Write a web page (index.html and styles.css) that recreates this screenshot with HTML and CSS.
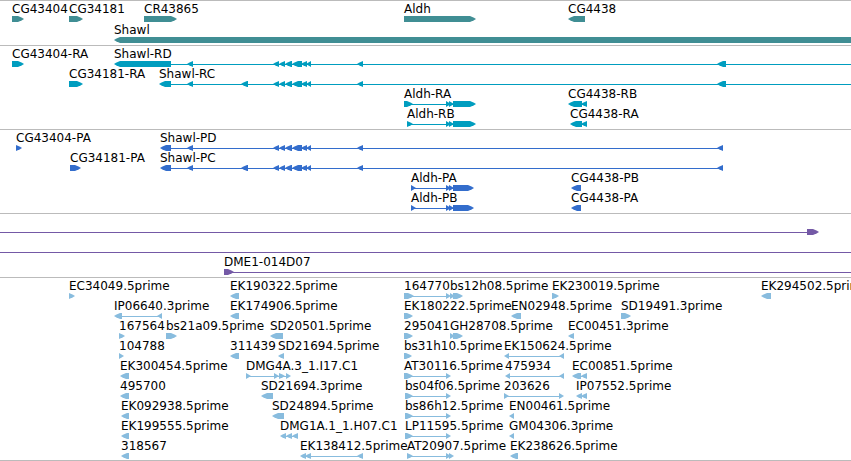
FILE: index.html
```
<!DOCTYPE html>
<html lang="en">
<head>
  <meta charset="UTF-8">
  <meta name="viewport" content="width=device-width, initial-scale=1.0">
  <title>Genome Browser</title>
  <link rel="stylesheet" href="styles.css">
</head>
<body>
  <main class="browser">
    <section class="track genes" id="genes" aria-label="Genes"></section>
    <section class="track transcripts" id="transcripts" aria-label="Transcripts"></section>
    <section class="track proteins" id="proteins" aria-label="Proteins"></section>
    <section class="track clones" id="clones" aria-label="Clones"></section>
    <section class="track ests" id="ests" aria-label="ESTs"></section>
  </main>
  <script src="script.js"></script>
</body>
</html>
```
FILE: styles.css
```
* {
  margin: 0;
  padding: 0;
  box-sizing: border-box;
}

body {
  background: #fff;
  color: #000;
  font-family: "DejaVu Sans", sans-serif;
  font-size: 12px;
  overflow-x: hidden;
}

.browser {
  width: 100%;
  overflow: hidden;
  border-bottom: 1px solid #bbb;
}

.track {
  display: grid;
  grid-auto-rows: 20px;
  border-top: 1px solid #bbb;
  padding-bottom: 3px;
}

.genes {
  color: #408e94;
  grid-auto-rows: 21px;
  padding-bottom: 2px;
}

.transcripts {
  color: #009dbf;
}

.proteins {
  color: #336dcc;
}

.clones {
  color: #7459a6;
}

.ests {
  color: #88bcde;
  padding-bottom: 2px;
}

.row {
  position: relative;
}

/* features sit at their position on the sequence */
.feature {
  position: absolute;
  top: 0;
  white-space: nowrap;
}

.label {
  display: block;
  height: 15px;
  line-height: 16px;
  color: #000;
}

.glyph {
  display: block;
  height: 6px;
  fill: currentColor;
}
```
FILE: script.js
```
// feature: [label, spans, line end (optional)]
// span: [start, end, strand]
const END = 2000;

const introns = [
  [187, 193, '-'], [273, 279, '-'], [279, 285, '-'], [285, 292, '-'],
  [292, 302, '-'], [301, 307, '-'], [306, 311, '-'], [357, 363, '-']
];
const aldhExons = [[446, 451, '+'], [449, 454, '+']];

const tracks = {
  genes: [
    [
      ['CG43404', [[12, 24, '+']]],
      ['CG34181', [[69, 83, '+']]],
      ['CR43865', [[144, 177, '+']]],
      ['Aldh', [[404, 476, '+']]],
      ['CG4438', [[568, 585, '-']]]
    ],
    [['Shawl', [[114, END, '-']]]]
  ],
  transcripts: [
    [
      ['CG43404-RA', [[12, 24, '+']]],
      ['Shawl-RD', [[114, 171, '-'], ...introns, [717, 726, '-']], END]
    ],
    [
      ['CG34181-RA', [[69, 83, '+']]],
      ['Shawl-RC', [[159, 171, '-'], [241, 248, '-'], ...introns, [717, 726, '-']], END]
    ],
    [
      ['Aldh-RA', [[404, 413, '+'], ...aldhExons, [453, 476, '+']]],
      ['CG4438-RB', [[568, 582, '-'], [581, 587, '-']]]
    ],
    [
      ['Aldh-RB', [[407, 413, '+'], ...aldhExons, [453, 476, '+']]],
      ['CG4438-RA', [[570, 582, '-'], [581, 587, '-']]]
    ]
  ],
  proteins: [
    [
      ['CG43404-PA', [[16, 22, '+']]],
      ['Shawl-PD', [[160, 171, '-'], ...introns, [717, 723, '-']]]
    ],
    [
      ['CG34181-PA', [[70, 81, '+']]],
      ['Shawl-PC', [[160, 171, '-'], [241, 248, '-'], ...introns, [717, 723, '-']]]
    ],
    [
      ['Aldh-PA', [[411, 416, '+'], ...aldhExons, [453, 474, '+']]],
      ['CG4438-PB', [[571, 581, '-']]]
    ],
    [
      ['Aldh-PB', [[411, 416, '+'], ...aldhExons, [453, 474, '+']]],
      ['CG4438-PA', [[571, 581, '-']]]
    ]
  ],
  clones: [
    [['', [[-20, -10, '+'], [807, 819, '+']]]],
    [['', [[-20, -10, '+']], END]],
    [['DME1-014D07', [[224, 234, '+']], END]]
  ],
  ests: [
    [
      ['EC34049.5prime', [[69, 75, '+']]],
      ['EK190322.5prime', [[230, 239, '-']]],
      ['164770', [[404, 414, '+'], [446, 451, '+']]],
      ['bs12h08.5prime', [[450, 455, '+'], [453, 463, '+']]],
      ['EK230019.5prime', [[552, 559, '+']]],
      ['EK294502.5prime', [[761, 771, '-']]]
    ],
    [
      ['IP06640.3prime', [[114, 122, '-'], [157, 162, '-']]],
      ['EK174906.5prime', [[230, 239, '-']]],
      ['EK180222.5prime', [[404, 413, '+']]],
      ['EN02948.5prime', [[511, 521, '-']]],
      ['SD19491.3prime', [[621, 631, '+']]]
    ],
    [
      ['167564', [[119, 125, '+']]],
      ['bs21a09.5prime', [[166, 177, '+']]],
      ['SD20501.5prime', [[270, 283, '-']]],
      ['295041', [[404, 413, '+']]],
      ['GH28708.5prime', [[450, 455, '+'], [453, 463, '+']]],
      ['EC00451.3prime', [[568, 574, '-']]]
    ],
    [
      ['104788', [[119, 124, '+']]],
      ['311439', [[230, 239, '-']]],
      ['SD21694.5prime', [[278, 284, '-']]],
      ['bs31h10.5prime', [[404, 412, '+']]],
      ['EK150624.5prime', [[504, 509, '-'], [559, 564, '-']]]
    ],
    [
      ['EK300454.5prime', [[120, 129, '-']]],
      ['DMG4A.3_1.I17.C1', [[246, 251, '+'], [274, 279, '+'], [279, 285, '+'], [286, 291, '+']]],
      ['AT30116.5prime', [[404, 413, '+'], [446, 451, '+']]],
      ['475934', [[505, 510, '-'], [559, 564, '-']]],
      ['EC00851.5prime', [[572, 581, '-'], [581, 587, '-']]]
    ],
    [
      ['495700', [[120, 129, '-']]],
      ['SD21694.3prime', [[261, 273, '-']]],
      ['bs04f06.5prime', [[405, 413, '+'], [446, 451, '+']]],
      ['203626', [[504, 509, '+'], [559, 564, '+']]],
      ['IP07552.5prime', [[576, 582, '-'], [581, 587, '-']]]
    ],
    [
      ['EK092938.5prime', [[121, 129, '-']]],
      ['SD24894.5prime', [[272, 284, '-']]],
      ['bs86h12.5prime', [[405, 413, '+'], [446, 451, '+']]],
      ['EN00461.5prime', [[509, 514, '-']]]
    ],
    [
      ['EK199555.5prime', [[121, 129, '-']]],
      ['DMG1A.1_1.H07.C1', [[280, 286, '-'], [286, 292, '-'], [292, 298, '-']]],
      ['LP11595.5prime', [[405, 413, '+'], [446, 451, '+']]],
      ['GM04306.3prime', [[509, 514, '-']]]
    ],
    [
      ['318567', [[121, 129, '-']]],
      ['EK138412.5prime', [[300, 306, '-'], [305, 311, '-'], [357, 363, '-']]],
      ['AT20907.5prime', [[407, 413, '+'], [446, 451, '+'], [449, 454, '+']]],
      ['EK238626.5prime', [[510, 518, '-']]]
    ]
  ]
};

// Block with a pointed end on the strand side
function arrow(start, end, strand) {
  const dir = strand === '+' ? 1 : -1;
  const back = dir > 0 ? start : end;
  const point = dir > 0 ? end : start;
  const neck = point - dir * Math.min(end - start, 6);
  const mid = point - dir * 2;
  return `<path d="M${back} 0H${neck}L${mid} 1.7L${point} 3L${mid} 4.3L${neck} 6H${back}Z"/>`;
}

function renderFeature([label, spans, lineEnd]) {
  const start = spans[0][0];
  const end = lineEnd || spans[spans.length - 1][1];
  const width = end - start;
  const arrows = spans.map(s => arrow(s[0] - start, s[1] - start, s[2])).join('');
  const line = spans.length > 1 || lineEnd ? `<rect x="2" y="3" width="${width - 4}" height="1"/>` : '';

  return `
    <div class="feature" style="left: ${start}px">
      <span class="label">${label}</span>
      <svg class="glyph" width="${width}" height="6" aria-hidden="true">${line}${arrows}</svg>
    </div>
  `;
}

Object.keys(tracks).forEach(id => {
  document.getElementById(id).innerHTML = tracks[id]
    .map(row => `<div class="row">${row.map(renderFeature).join('')}</div>`)
    .join('');
});
```
